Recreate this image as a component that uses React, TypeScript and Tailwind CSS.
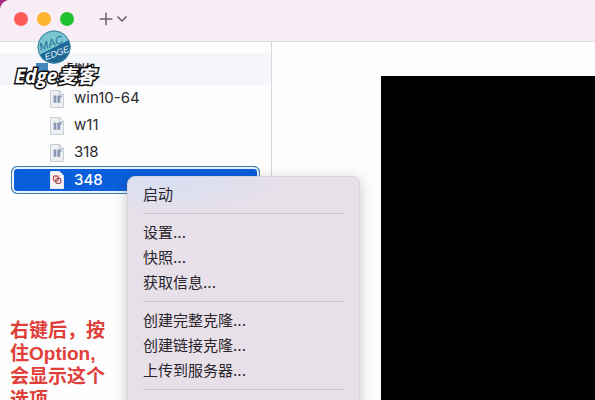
import { ChevronDown, Plus } from "lucide-react";

const machines = [
  { name: "win10-64", selected: false },
  { name: "w11", selected: false },
  { name: "318", selected: false },
  { name: "348", selected: true },
];

const menuGroups = [
  ["启动"],
  ["设置...", "快照...", "获取信息..."],
  ["创建完整克隆...", "创建链接克隆...", "上传到服务器..."],
  [],
];

function MachineIcon({ selected }: { selected: boolean }) {
  return (
    <svg viewBox="0 0 14 18" className="h-[18px] w-[14px] shrink-0" aria-hidden="true">
      <path
        d="M.5.5h9l4 4v13H.5z"
        fill={selected ? "#f8f4f8" : "#eef0f4"}
        stroke={selected ? "#e4e6f2" : "#c9ced6"}
      />
      <path d="M9.5.5v4h4z" fill="#fff" stroke={selected ? "#d5d9e8" : "#b3bac5"} strokeWidth=".8" />
      {selected ? (
        <g fill="none" stroke="#c4504f" strokeWidth="1.3">
          <rect x="3.4" y="5" width="5" height="5" rx="1.5" />
          <rect x="5.8" y="7.4" width="5" height="5" rx="1.5" stroke="#a55865" />
        </g>
      ) : (
        <path d="M3.6 5.4h2.8v7.4H3.6zM7.4 5.4h2.8v7.4H7.4zM10.2 5.4h1.6v2h-1.6z" fill="#8698b1" />
      )}
    </svg>
  );
}

function Watermark() {
  return (
    <div className="pointer-events-none absolute top-[30px] left-[15px] z-10 flex flex-col">
      <svg viewBox="0 0 34 34" className="ml-[22px] size-[34px]" role="img" aria-label="MAC EDGE">
        <defs>
          <clipPath id="badge">
            <circle cx="17" cy="17" r="16.5" />
          </clipPath>
        </defs>
        <g clipPath="url(#badge)">
          <rect width="34" height="34" fill="#79c5d2" />
          <path d="M0 26 34 9v25H0z" fill="#1d6795" />
        </g>
        <circle cx="17" cy="17" r="16" fill="none" stroke="#3c809f" />
        <g fontFamily="Liberation Sans, sans-serif" fontStyle="italic" textAnchor="middle">
          <text x="14" y="17" fontSize="11" fill="#236c91" transform="rotate(-20 14 13)">
            MAC
          </text>
          <text x="20" y="26" fontSize="9" fill="#e6f6fa" transform="rotate(-20 20 23)">
            EDGE
          </text>
        </g>
      </svg>
      <span className="font-['Open_Sans','Noto_Sans_CJK_SC',sans-serif] text-[19px] leading-6 font-bold text-white italic [paint-order:stroke_fill] [-webkit-text-stroke:3px_#111]">
        Edge麦客
      </span>
    </div>
  );
}

function ContextMenu() {
  return (
    <div
      role="menu"
      className="absolute top-[176px] left-[127px] z-20 w-[233px] rounded-lg border border-[#d9d2db] bg-[#e8e0e9] bg-[radial-gradient(ellipse_130px_40px_at_40px_0px,#d6dff3,transparent)] px-[15px] pt-[5px] pb-6 shadow-[0_3px_14px_rgba(0,0,0,0.22)]"
    >
      {menuGroups.map((items, i) => (
        <div key={i}>
          {i > 0 && <hr className="my-[6px] border-[#cdc6cf]" />}
          {items.map((item) => (
            <button
              key={item}
              role="menuitem"
              className="block h-[25px] w-full text-left text-[15px] leading-[25px] text-[#29252b]"
            >
              {item}
            </button>
          ))}
        </div>
      ))}
    </div>
  );
}

export default function App() {
  return (
    <div className="h-screen overflow-hidden bg-[#a52c83] font-['Inter','Noto_Sans_CJK_SC',sans-serif]">
      <div className="relative flex h-full flex-col overflow-hidden rounded-tl-[10px] bg-[#fefdfe]">
        <header className="flex h-[42px] shrink-0 items-center border-b border-[#e2dae2] bg-[#f8ecf5] pb-[3px] pl-[14px]">
          <div className="flex gap-[9px]">
            <button aria-label="关闭" className="size-[14px] rounded-full bg-[#fc5b57]" />
            <button aria-label="最小化" className="size-[14px] rounded-full bg-[#fdb32b]" />
            <button aria-label="缩放" className="size-[14px] rounded-full bg-[#1fc233]" />
          </div>
          <button aria-label="新建" className="ml-[22px] flex items-center text-[#6b646b]">
            <Plus className="size-5" strokeWidth={1.8} />
            <ChevronDown className="-ml-0.5 size-4" strokeWidth={2.6} />
          </button>
        </header>

        <div className="flex min-h-0 flex-1">
          <aside className="w-[272px] shrink-0 border-r border-[#d9d6dc] pt-[11px]">
            <div className="flex h-8 items-center gap-[15px] bg-[#f5f6fc] pl-9">
              <span className="h-3 w-3 bg-[#4388bd]" />
              <span className="text-[11px] leading-4 font-bold text-[#222]">虚拟机</span>
            </div>
            <ul className="px-[11px]">
              {machines.map((m) => (
                <li key={m.name}>
                  <button
                    className={
                      m.selected
                        ? "flex h-[28px] w-full items-center gap-[10px] rounded-md border border-[#3f7fae] bg-[#0b5fdb] pl-[38px] text-[15px] font-medium text-white shadow-[inset_0_0_0_2px_#e9f5fa]"
                        : "flex h-[27px] w-full items-center gap-[10px] pl-[39px] text-[15px] text-[#2c2c2e]"
                    }
                  >
                    <MachineIcon selected={m.selected} />
                    {m.name}
                  </button>
                </li>
              ))}
            </ul>
            <p className="mt-[125px] w-[116px] pl-[10px] font-['Liberation_Sans','Noto_Sans_CJK_SC',sans-serif] text-[19px] leading-[23px] font-semibold text-[#e0403a]">
              右键后，按
              <br />
              住Option,
              <br />
              会显示这个
              <br />
              选项
            </p>
          </aside>

          <main className="flex min-w-0 flex-1 pt-[34px] pl-[109px]">
            <div className="flex-1 bg-black" />
          </main>
        </div>

        <Watermark />
        <ContextMenu />
      </div>
    </div>
  );
}
